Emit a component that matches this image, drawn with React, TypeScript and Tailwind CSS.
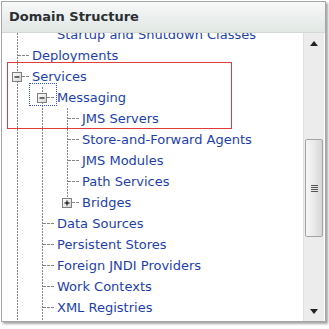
import React from "react";

type Cell = "line" | "blank" | "tee" | "elbow";
type Row = {
  label: string;
  cells: Cell[];
  box?: "minus" | "plus";
  focus?: boolean;
};

const rows: Row[] = [
  { label: "Startup and Shutdown Classes", cells: ["line", "blank"] },
  { label: "Deployments", cells: ["tee"] },
  { label: "Services", cells: ["tee"], box: "minus" },
  { label: "Messaging", cells: ["line", "tee"], box: "minus", focus: true },
  { label: "JMS Servers", cells: ["line", "line", "tee"] },
  { label: "Store-and-Forward Agents", cells: ["line", "line", "tee"] },
  { label: "JMS Modules", cells: ["line", "line", "tee"] },
  { label: "Path Services", cells: ["line", "line", "tee"] },
  { label: "Bridges", cells: ["line", "line", "elbow"], box: "plus" },
  { label: "Data Sources", cells: ["line", "tee"] },
  { label: "Persistent Stores", cells: ["line", "tee"] },
  { label: "Foreign JNDI Providers", cells: ["line", "tee"] },
  { label: "Work Contexts", cells: ["line", "tee"] },
  { label: "XML Registries", cells: ["line", "tee"] },
  { label: "XML Entity Caches", cells: ["line", "tee"] },
];

const LINE = "#858585";

function ConnectorCell({ type, box }: { type: Cell; box?: "minus" | "plus" }) {
  return (
    <svg width="25" height="21" viewBox="0 0 25 21" className="shrink-0 block">
      {(type === "line" || type === "tee") && (
        <line x1="12.5" y1="0" x2="12.5" y2="21" stroke={LINE} strokeWidth="1" strokeDasharray="2 1" />
      )}
      {type === "elbow" && (
        <line x1="12.5" y1="0" x2="12.5" y2="10" stroke={LINE} strokeWidth="1" strokeDasharray="2 1" />
      )}
      {(type === "tee" || type === "elbow") && (
        <line x1="13" y1="10.5" x2="25" y2="10.5" stroke={LINE} strokeWidth="1" strokeDasharray="3 1" />
      )}
      {box && (
        <g>
          <defs>
            <linearGradient id="bx" x1="0" y1="0" x2="1" y2="1">
              <stop offset="0" stopColor="#ffffff" />
              <stop offset="1" stopColor="#d4d4d4" />
            </linearGradient>
          </defs>
          <rect x="7.5" y="6.5" width="9" height="9" fill="url(#bx)" stroke="#7f7f7f" strokeWidth="1" />
          <line x1="9.5" y1="11" x2="14.5" y2="11" stroke="#111" strokeWidth="1.2" />
          {box === "plus" && (
            <line x1="12" y1="8.5" x2="12" y2="13.5" stroke="#111" strokeWidth="1.2" />
          )}
        </g>
      )}
    </svg>
  );
}

function TreeRow({ row }: { row: Row }) {
  const last = row.cells.length - 1;
  return (
    <div className="relative flex h-[21px] items-center">
      {row.cells.map((c, i) => (
        <ConnectorCell key={i} type={c} box={i === last ? row.box : undefined} />
      ))}
      <span className="pl-[2px] whitespace-nowrap text-[13px] leading-[21px] text-[#1d3fae]">
        {row.label}
      </span>
      {row.focus && (
        <div className="absolute left-[24px] top-[-4px] w-[28px] h-[23px] border border-dotted border-[#3355cc] text-[#3355cc]" />
      )}
    </div>
  );
}

export default function App() {
  return (
    <div
      className="w-[329px] h-[329px] bg-white overflow-hidden"
      style={{ fontFamily: '"DejaVu Sans", Verdana, sans-serif' }}
    >
      <div className="ml-[1px] mt-[1px] w-[325px] h-[321px] border border-[#a6a6a6] text-[#a6a6a6] shadow-[2px_2px_2px_rgba(0,0,0,0.35)] flex flex-col bg-white">
        <div className="h-[30px] shrink-0 flex items-center pl-[7px] bg-gradient-to-b from-[#f8f9f9] via-[#ebefed] to-[#e2e8e5] text-[13px] font-bold text-[#2b2f33]">
          Domain Structure
        </div>
        <div className="h-[1px] shrink-0 bg-[#d2d9d5]" />
        <div className="flex-1 flex min-h-0">
          <div className="relative flex-1 overflow-hidden">
            <div className="mt-[-9px] pl-[3px] flex flex-col">
              {rows.map((r) => (
                <TreeRow key={r.label} row={r} />
              ))}
            </div>
            <div className="pointer-events-none absolute left-[5px] top-[29px] w-[225px] h-[67px] border border-[#e23b3b] text-[#e23b3b]" />
          </div>
          <div className="w-[21px] mr-[1px] shrink-0 flex flex-col bg-[#ececec] border-l border-[#e0e0e0] text-[#e0e0e0]">
            <div className="h-[20px] flex items-center justify-center">
              <svg width="8" height="5" viewBox="0 0 8 5">
                <polygon points="4,0 8,5 0,5" fill="#222" />
              </svg>
            </div>
            <div className="flex-1 flex flex-col">
              <div className="mt-[86px] mx-[1px] h-[98px] rounded-[2px] border border-[#a3a3a3] text-[#a3a3a3] bg-gradient-to-r from-[#f6f6f6] via-[#eaeaea] to-[#d6d6d6] flex items-center justify-center">
                <div className="flex flex-col gap-[1px]">
                  <div className="w-[7px] h-[1px] bg-[#555]" />
                  <div className="w-[7px] h-[1px] bg-[#555]" />
                  <div className="w-[7px] h-[1px] bg-[#555]" />
                  <div className="w-[7px] h-[1px] bg-[#555]" />
                </div>
              </div>
            </div>
            <div className="h-[20px] flex items-center justify-center">
              <svg width="8" height="5" viewBox="0 0 8 5">
                <polygon points="0,0 8,0 4,5" fill="#222" />
              </svg>
            </div>
          </div>
        </div>
      </div>
    </div>
  );
}
